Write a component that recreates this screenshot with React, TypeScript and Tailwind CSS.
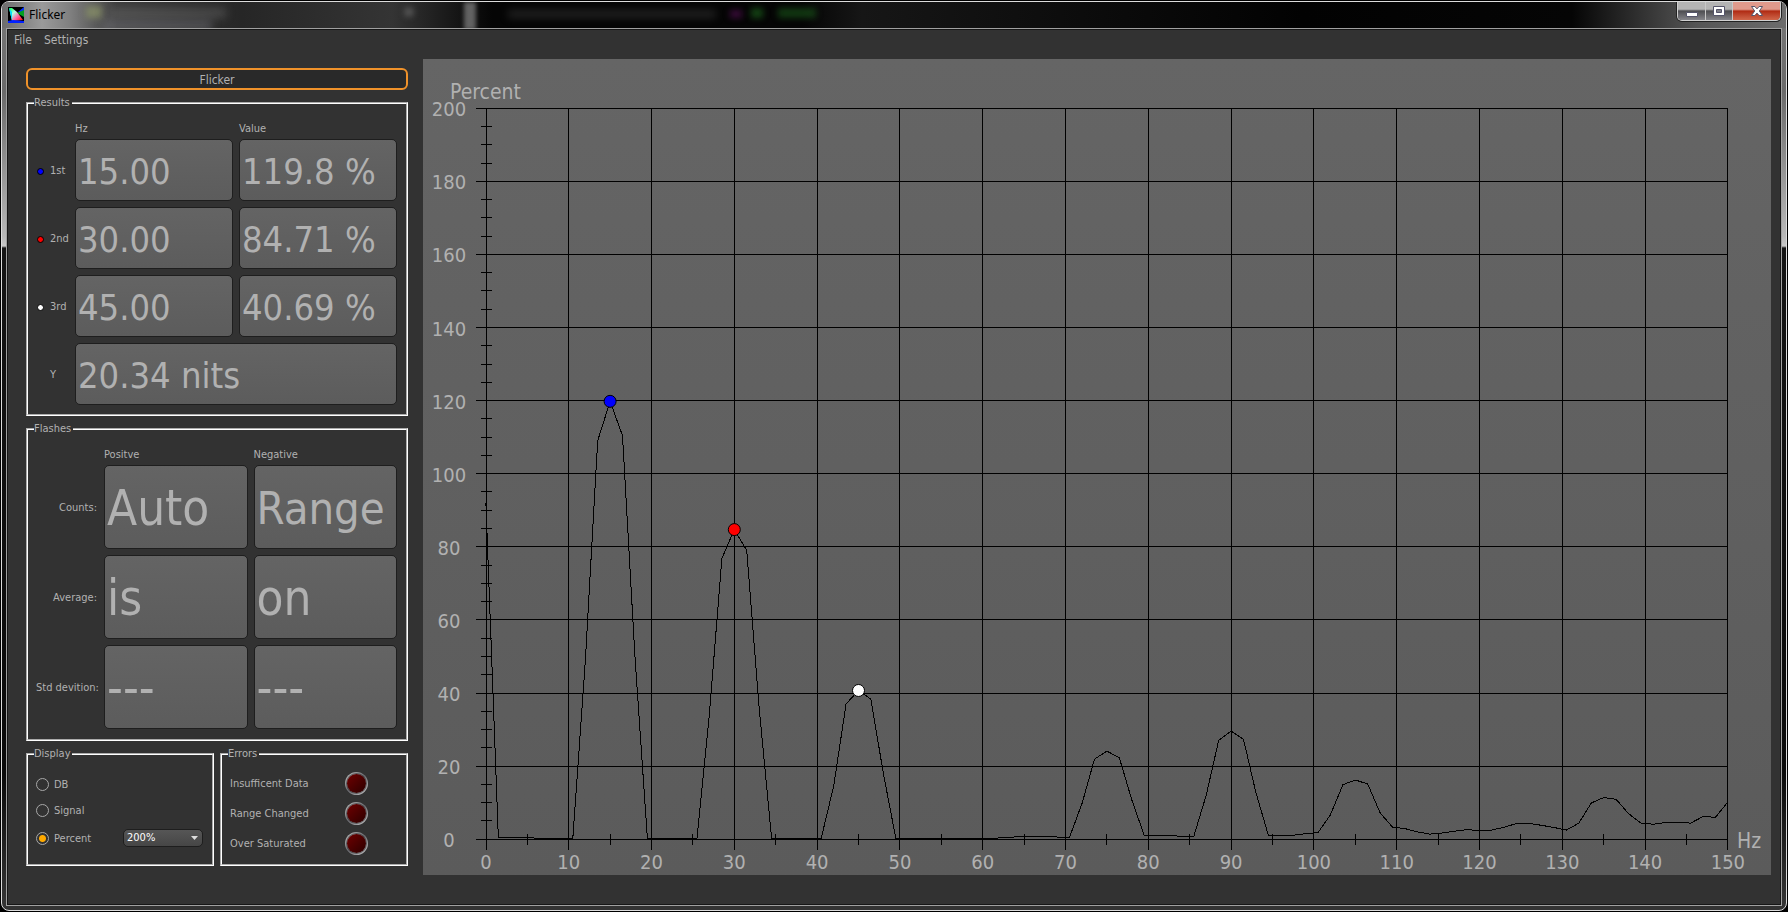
import { useState } from "react";
import type { ReactNode } from "react";

const results = [
  { id: "first", label: "1st", dot: "bg-[#0000ff]", hz: "15.00", value: "119.8 %" },
  { id: "second", label: "2nd", dot: "bg-[#ff0000]", hz: "30.00", value: "84.71 %" },
  { id: "third", label: "3rd", dot: "bg-white", hz: "45.00", value: "40.69 %" },
];

const flashes = [
  { id: "counts", label: "Counts:", positive: "Auto", negative: "Range" },
  { id: "average", label: "Average:", positive: "is", negative: "on" },
  { id: "deviation", label: "Std devition:", positive: "---", negative: "---" },
];

const errors = ["Insufficent Data", "Range Changed", "Over Saturated"];

// one sample every 1.5 Hz, in percent
const samples = [
  92, 0.6, 0.6, 0.5, 0.3, 0.3, 0.3, 0.3, 48.5, 109, 119.8, 110.4, 50, 0.3, 0.3, 0.3, 0.3, 0.3,
  34.5, 76.8, 84.7, 79, 36, 0.3, 0.3, 0.3, 0.3, 0.3, 14.5, 37, 40.7, 38.3, 18, 0.3, 0.3, 0.3,
  0.3, 0.3, 0.3, 0.3, 0.3, 0.3, 0.4, 0.8, 0.8, 0.8, 0.6, 0.6, 9.8, 21.9, 24.1, 22.3, 10.8, 1.1,
  1.1, 1, 0.8, 0.8, 12.1, 27, 29.6, 27.3, 12.7, 1.1, 1.1, 1.1, 1.5, 1.8, 6.7, 14.9, 16.2, 15.1,
  7.2, 3.3, 2.9, 2, 1.4, 1.7, 2.2, 2.6, 2.4, 2.5, 3.3, 4.3, 4.3, 3.8, 3.2, 2.5, 4.4, 9.9, 11.4,
  10.9, 7, 4.4, 4.1, 4.6, 4.6, 4.4, 6.2, 6, 10.2,
];

const peaks = [
  { hz: 15, value: 119.8, color: "#0000ff" },
  { hz: 30, value: 84.71, color: "#ff0000" },
  { hz: 45, value: 40.69, color: "#ffffff" },
];

const px = (hz: number) => 62.9 + hz * 8.28;
const py = (value: number) => 780.2 - value * 3.655;
const snap = (n: number) => Math.floor(n) + 0.5;

function range(from: number, to: number, step: number) {
  const out: number[] = [];
  for (let n = from; n <= to; n += step) out.push(n);
  return out;
}

function Group({ title, className, children }: { title: string; className?: string; children: ReactNode }) {
  return (
    <fieldset className={`min-w-0 border-2 border-white pl-2 pr-[9px] [border-style:groove] ${className ?? ""}`}>
      <legend className="-ml-0.5 pr-0.5 leading-4">{title}</legend>
      {children}
    </fieldset>
  );
}

const fieldClass =
  "w-full min-w-0 rounded-[5px] border border-[#1e1e1e] bg-gradient-to-b from-[#646464] to-[#5c5c5c] px-0.5 pt-0.5 text-[#b1b1b1] outline-none";

function Results() {
  return (
    <Group title="Results" className="pb-[9px]">
      <div className="grid grid-cols-[33px_1fr_1fr] items-center gap-x-1.5 gap-y-1.5">
        <span />
        <span className="-mb-1 pt-2.5 leading-4">Hz</span>
        <span className="-mb-1 pt-2.5 leading-4">Value</span>
        {results.map((row) => (
          <div key={row.id} className="contents">
            <label htmlFor={`${row.id}-hz`} className="flex items-center gap-1.5 pl-px pt-0.5">
              <span className={`size-[7px] shrink-0 rounded-full border border-black ${row.dot}`} />
              {row.label}
            </label>
            <input id={`${row.id}-hz`} readOnly value={row.hz} className={`${fieldClass} h-[62px] text-[36px]`} />
            <input
              aria-label={`${row.label} value`}
              readOnly
              value={row.value}
              className={`${fieldClass} h-[62px] text-[36px]`}
            />
          </div>
        ))}
        <label htmlFor="luminance" className="pl-3.5 pt-0.5">
          Y
        </label>
        <input
          id="luminance"
          readOnly
          value="20.34 nits"
          className={`${fieldClass} col-span-2 h-[62px] text-[36px]`}
        />
      </div>
    </Group>
  );
}

function Flashes() {
  return (
    <Group title="Flashes" className="pb-[10px]">
      <div className="grid grid-cols-[62px_1fr_1fr] items-center gap-x-1.5 gap-y-1.5">
        <span />
        <span className="-mb-1 pt-2.5 leading-4">Positve</span>
        <span className="-mb-1 pt-2.5 leading-4">Negative</span>
        {flashes.map((row) => (
          <div key={row.id} className="contents">
            <label htmlFor={`${row.id}-positive`} className="whitespace-nowrap pr-px pt-0.5 text-right">
              {row.label}
            </label>
            <input
              id={`${row.id}-positive`}
              readOnly
              value={row.positive}
              className={`${fieldClass} h-[84px] text-[49px]`}
            />
            <input
              aria-label={`${row.label} negative`}
              readOnly
              value={row.negative}
              className={`${fieldClass} h-[84px] ${row.negative === "Range" ? "text-[45px]" : "text-[49px]"}`}
            />
          </div>
        ))}
      </div>
    </Group>
  );
}

function DisplayMode() {
  const [mode, setMode] = useState("Percent");

  return (
    <Group title="Display" className="flex-1 pb-[11px]">
      <div className="pt-[9px]">
        {["DB", "Signal", "Percent"].map((name) => (
          <div key={name} className={`flex items-center justify-between ${name === "Percent" ? "h-[30px]" : "h-[26px]"}`}>
            <label className="flex items-center gap-[5px]">
              <input
                type="radio"
                name="mode"
                checked={mode === name}
                onChange={() => setMode(name)}
                className="size-[13px] appearance-none rounded-full border border-[#a8a8a8] checked:bg-[radial-gradient(circle,#ffaa00_3px,#323232_4px)]"
              />
              <span className="pt-0.5">{name}</span>
            </label>
            {name === "Percent" && (
              <div className="relative">
                <select
                  aria-label="Full scale"
                  defaultValue="200%"
                  className="block h-[18px] w-20 appearance-none rounded-[5px] border border-[#1e1e1e] bg-gradient-to-b from-[#565656] to-[#464646] pl-[3px] leading-4 text-white outline-none"
                >
                  <option>50%</option>
                  <option>100%</option>
                  <option>200%</option>
                </select>
                <svg
                  viewBox="0 0 7 4"
                  className="pointer-events-none absolute right-[5px] top-[7px] h-1 w-[7px] fill-[#dcdcdc]"
                  aria-hidden="true"
                >
                  <path d="M0 0h7L3.5 4z" />
                </svg>
              </div>
            )}
          </div>
        ))}
      </div>
    </Group>
  );
}

function Led() {
  return (
    <span className="size-[23px] rounded-full bg-gradient-to-br from-[#c8c8c8] via-[#6e6e73] to-[#d0d0d0] p-0.5">
      <span className="block size-full rounded-full bg-gradient-to-br from-[#700000] to-[#2c0000] ring-1 ring-black/40" />
    </span>
  );
}

function Errors() {
  return (
    <Group title="Errors" className="flex-1 pb-1.5">
      <ul className="pr-[29px] pt-1.5">
        {errors.map((name) => (
          <li key={name} className="flex h-[30px] items-center justify-between">
            <span className="pt-0.5">{name}</span>
            <Led />
          </li>
        ))}
      </ul>
    </Group>
  );
}

function Chart() {
  const line = samples.map((v, i) => `${px(i * 1.5)},${py(v)}`).join(" ");

  return (
    <svg
      viewBox="0 0 1348 816"
      role="img"
      aria-label="Flicker spectrum"
      className="h-auto w-full bg-gradient-to-b from-[#656565] to-[#5b5b5b] text-[20px]"
    >
      <g stroke="#000" strokeWidth="1" shapeRendering="crispEdges">
        {range(0, 200, 5).map((v) => {
          const y = snap(py(v));
          return v % 20 === 0 ? (
            <line key={v} x1="53" x2="1305" y1={y} y2={y} />
          ) : (
            <line key={v} x1="58" x2="69" y1={y} y2={y} />
          );
        })}
        {range(0, 150, 5).map((hz) => {
          const x = snap(hz === 0 ? 63 : px(hz));
          return hz % 10 === 0 ? (
            <line key={hz} x1={x} x2={x} y1="49" y2="791" />
          ) : (
            <line key={hz} x1={x} x2={x} y1="775" y2="786" />
          );
        })}
      </g>
      <polyline points={line} fill="none" stroke="#000" strokeWidth="1" shapeRendering="crispEdges" />
      {peaks.map((p) => (
        <circle key={p.hz} cx={px(p.hz)} cy={py(p.value)} r="6" fill={p.color} stroke="#000" strokeWidth="1" />
      ))}
      <g fill="#b1b1b1" textAnchor="middle">
        {range(0, 200, 20).map((v) => (
          <text key={v} x="26" y={py(v) + 8}>
            {v}
          </text>
        ))}
        {range(0, 150, 10).map((hz) => (
          <text key={hz} x={px(hz)} y="810">
            {hz}
          </text>
        ))}
      </g>
      <g fill="#b1b1b1" className="text-[21px]">
        <text x="27" y="40">
          Percent
        </text>
        <text x="1314" y="789">
          Hz
        </text>
      </g>
    </svg>
  );
}

function AppIcon() {
  return (
    <svg viewBox="0 0 16 16" className="size-4" aria-hidden="true">
      <defs>
        <linearGradient id="gamut" x1="0" y1="0" x2="1" y2="1">
          <stop offset="0" stopColor="#00ff40" />
          <stop offset="0.35" stopColor="#b0ffe8" />
          <stop offset="0.65" stopColor="#ff60a0" />
          <stop offset="1" stopColor="#ff0000" />
        </linearGradient>
      </defs>
      <path d="M0 0h16v16H0z" />
      <path d="M16 0v6L10 5z" fill="#0030ff" />
      <path d="M9 6l7-3v7z" fill="#00a020" />
      <path d="M1 1h3l5 4 6 8-11 1z" fill="url(#gamut)" />
      <path d="M1 1l3 4v9z" fill="#00e0ff" />
      <path d="M0 14l5-1 11 1v2H0z" fill="#0020ff" />
    </svg>
  );
}

function TitleBar() {
  return (
    <header className="relative flex h-[26px] items-start justify-between overflow-hidden rounded-t-md bg-[linear-gradient(90deg,#6c6c6c_0,#9a9a9a_40px,#808080_68px,#3c3c3c_115px,#262626_240px,#343434_390px,#050505_490px,#050505_800px,#161616_860px,#020202_1300px,#050505_88%,#555_95%,#6c6c6c_100%)]">
      {/* what shows through the glass */}
      <div className="pointer-events-none absolute inset-0" aria-hidden="true">
        <div className="absolute left-[84px] top-1 h-3 w-4 bg-[#8c9468]/70 blur-[3px]" />
        <div className="absolute left-[108px] top-1.5 h-2.5 w-[116px] bg-[#8a8a8a]/30 blur-[4px]" />
        <div className="absolute left-[102px] top-[18px] h-3 w-[108px] bg-[#9a9aa4]/30 blur-[4px]" />
        <div className="absolute left-[403px] top-1.5 h-2 w-2 bg-[#aaa]/40 blur-[3px]" />
        <div className="absolute left-[462px] top-0 h-7 w-3 bg-[#999]/60 blur-[2px]" />
        <div className="absolute left-[506px] top-2 h-2 w-[208px] bg-[#777]/25 blur-[4px]" />
        <div className="absolute left-[728px] top-2 h-2 w-3 bg-[#6b126b]/50 blur-[3px]" />
        <div className="absolute left-[749px] top-1.5 h-2.5 w-[12px] bg-[#1e6a1e]/60 blur-[3px]" />
        <div className="absolute left-[776px] top-1.5 h-2.5 w-[38px] bg-[#1e6a1e]/50 blur-[3px]" />
      </div>
      <div className="relative flex items-center gap-[5px] pl-1.5 pt-[5px]">
        <AppIcon />
        <h1 className="font-['Noto_Sans','Open_Sans',sans-serif] text-[12px] leading-4 text-black">Flicker</h1>
      </div>
      <div className="relative mr-[5px] flex h-[19px] rounded-b-[5px] border border-t-0 border-[#d0d0d0] shadow-[0_0_0_1px_#222]">
        <button
          aria-label="Minimize"
          className="flex w-[28px] items-end justify-center rounded-bl-[4px] border-r border-[#c8c8c8] bg-gradient-to-b from-[#b4b4b4] from-40% via-[#4e4e52] via-50% to-[#85858a] pb-[3px]"
        >
          <svg viewBox="0 0 12 5" className="h-[5px] w-3" aria-hidden="true">
            <path d="M.5.5h11v4H.5z" fill="#fff" stroke="#55556a" />
          </svg>
        </button>
        <button
          aria-label="Maximize"
          className="flex w-[27px] items-center justify-center border-r border-[#c8c8c8] bg-gradient-to-b from-[#b4b4b4] from-40% via-[#4e4e52] via-50% to-[#85858a]"
        >
          <svg viewBox="0 0 12 10" className="h-2.5 w-3" aria-hidden="true">
            <path d="M.5.5h11v9H.5z" fill="#fff" stroke="#55556a" />
            <path d="M3.5 3.5h5v3h-5z" fill="#808088" stroke="#55556a" />
          </svg>
        </button>
        <button
          aria-label="Close"
          className="flex w-[47px] items-center justify-center rounded-br-[4px] bg-gradient-to-b from-[#e09a8c] from-40% via-[#b02a12] via-50% to-[#d0664a]"
        >
          <svg viewBox="0 0 12 10" className="h-2.5 w-3" aria-hidden="true">
            <path
              d="M.5.5h3.4L6 2.9 8.1.5h3.4L8.300 5l3.200 4.500H8.100L6 7.100 3.900 9.500H.5L3.700 5z"
              fill="#fff"
              stroke="#55556a"
            />
          </svg>
        </button>
      </div>
    </header>
  );
}

export default function App() {
  return (
    <div className="flex min-h-screen flex-col bg-black p-px font-['DejaVu_Sans_Condensed','Noto_Sans',sans-serif] text-[11px] leading-4 text-[#b1b1b1]">
      <div className="flex flex-1 flex-col rounded-lg border border-[#dcdcdc] bg-[linear-gradient(180deg,#777_0,#6a6a6a_90px,#b8b8b8_235px,#c8c8c8_244px,#141414_246px,#0a0a0a_85%,#333_99%)]">
        <TitleBar />
        <div className="mx-1 mb-1 flex flex-1 flex-col border border-[#a0a0a0]">
          <div className="flex flex-1 flex-col border border-[#161616] bg-[#323232]">
            <nav className="flex h-[29px] items-start gap-3 pl-1.5 pt-0.5 text-[12px]">
              <button className="leading-4">File</button>
              <button className="leading-4">Settings</button>
            </nav>
            <main className="flex flex-1 items-start gap-[15px] pb-7 pl-[18px] pr-[9px]">
              <div className="flex w-[382px] shrink-0 flex-col gap-[5px] pt-[9px]">
                <button className="h-[22px] rounded-md border-2 border-[#f0922a] bg-[#292929] pt-px text-[12px] leading-4">
                  Flicker
                </button>
                <Results />
                <Flashes />
                <div className="flex gap-1.5">
                  <DisplayMode />
                  <Errors />
                </div>
              </div>
              <div className="min-w-0 flex-1">
                <Chart />
              </div>
            </main>
          </div>
        </div>
      </div>
    </div>
  );
}
